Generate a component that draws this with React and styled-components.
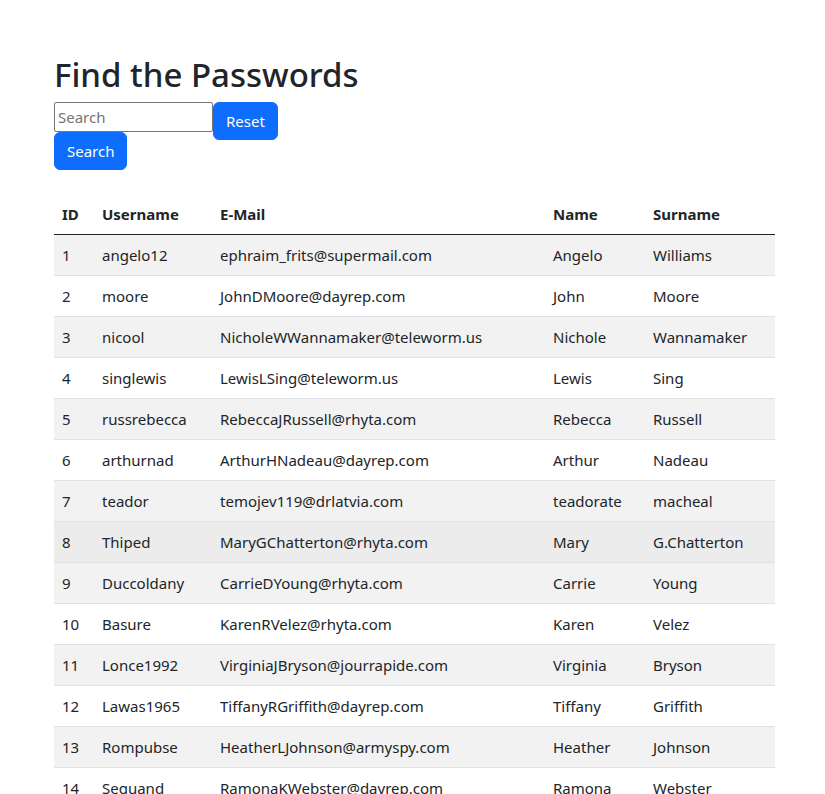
import React from "react";
import styled, { createGlobalStyle } from "styled-components";

const GlobalStyle = createGlobalStyle`
  body {
    margin: 0;
    font-family: "Noto Sans", "Open Sans", sans-serif;
    font-size: 15px;
    line-height: 24px;
    color: #212529;
    background: #fff;
  }
`;

const Page = styled.div`
  width: 721px;
  margin-left: 54px;
  padding-top: 54px;
`;

const Title = styled.h1`
  margin: 0 0 7px;
  font-size: 33px;
  font-weight: 500;
  line-height: 41px;
  color: #212529;
`;

const SearchForm = styled.form`
  display: grid;
  grid-template-columns: auto auto;
  grid-template-rows: 30px 8px 30px;
  justify-content: start;
  margin-bottom: 24px;
`;

const SearchInput = styled.input`
  grid-column: 1;
  grid-row: 1;
  box-sizing: border-box;
  width: 159px;
  height: 30px;
  padding: 1px 3px;
  border: 1px solid #767676;
  border-radius: 2px;
  font-family: inherit;
  font-size: 15px;
  color: #212529;
  &::placeholder {
    color: #757575;
  }
`;

const Button = styled.button`
  grid-column: ${(p) => p.$col};
  grid-row: ${(p) => p.$row};
  justify-self: start;
  box-sizing: border-box;
  height: 38px;
  padding: 6px 12px;
  border: 1px solid #0d6efd;
  border-radius: 6px;
  background: #0d6efd;
  color: #fff;
  font-family: inherit;
  font-size: 15px;
  line-height: 24px;
  cursor: pointer;
`;

const Table = styled.table`
  width: 100%;
  border-collapse: collapse;
  table-layout: fixed;
  color: #212529;
`;

const HeadCell = styled.th`
  box-sizing: border-box;
  width: ${(p) => p.$w}px;
  padding: 8px;
  text-align: left;
  font-weight: 700;
  border-bottom: 1px solid #212529;
`;

const Row = styled.tr`
  background: ${(p) => (p.$hover ? "#ececec" : p.$striped ? "#f2f2f2" : "#fff")};
`;

const Cell = styled.td`
  padding: 8px;
  border-bottom: 1px solid #dee2e6;
  white-space: nowrap;
  overflow: hidden;
`;

const columns = [
  { label: "ID", w: 40 },
  { label: "Username", w: 118 },
  { label: "E-Mail", w: 333 },
  { label: "Name", w: 100 },
  { label: "Surname", w: 130 },
];

const users = [
  [1, "angelo12", "ephraim_frits@supermail.com", "Angelo", "Williams"],
  [2, "moore", "JohnDMoore@dayrep.com", "John", "Moore"],
  [3, "nicool", "NicholeWWannamaker@teleworm.us", "Nichole", "Wannamaker"],
  [4, "singlewis", "LewisLSing@teleworm.us", "Lewis", "Sing"],
  [5, "russrebecca", "RebeccaJRussell@rhyta.com", "Rebecca", "Russell"],
  [6, "arthurnad", "ArthurHNadeau@dayrep.com", "Arthur", "Nadeau"],
  [7, "teador", "temojev119@drlatvia.com", "teadorate", "macheal"],
  [8, "Thiped", "MaryGChatterton@rhyta.com", "Mary", "G.Chatterton"],
  [9, "Duccoldany", "CarrieDYoung@rhyta.com", "Carrie", "Young"],
  [10, "Basure", "KarenRVelez@rhyta.com", "Karen", "Velez"],
  [11, "Lonce1992", "VirginiaJBryson@jourrapide.com", "Virginia", "Bryson"],
  [12, "Lawas1965", "TiffanyRGriffith@dayrep.com", "Tiffany", "Griffith"],
  [13, "Rompubse", "HeatherLJohnson@armyspy.com", "Heather", "Johnson"],
  [14, "Seguand", "RamonaKWebster@dayrep.com", "Ramona", "Webster"],
];

export default function App() {
  return (
    <>
      <GlobalStyle />
      <Page>
        <Title>Find the Passwords</Title>
        <SearchForm onSubmit={(e) => e.preventDefault()}>
          <SearchInput type="text" placeholder="Search" />
          <Button type="button" $col="2" $row="1 / 3">Reset</Button>
          <Button type="submit" $col="1" $row="2 / 4">Search</Button>
        </SearchForm>
        <Table>
          <thead>
            <tr>
              {columns.map((c) => (
                <HeadCell key={c.label} $w={c.w}>{c.label}</HeadCell>
              ))}
            </tr>
          </thead>
          <tbody>
            {users.map((u, i) => (
              <Row key={u[0]} $striped={i % 2 === 0} $hover={u[0] === 8}>
                {u.map((v, j) => (
                  <Cell key={j}>{v}</Cell>
                ))}
              </Row>
            ))}
          </tbody>
        </Table>
      </Page>
    </>
  );
}
